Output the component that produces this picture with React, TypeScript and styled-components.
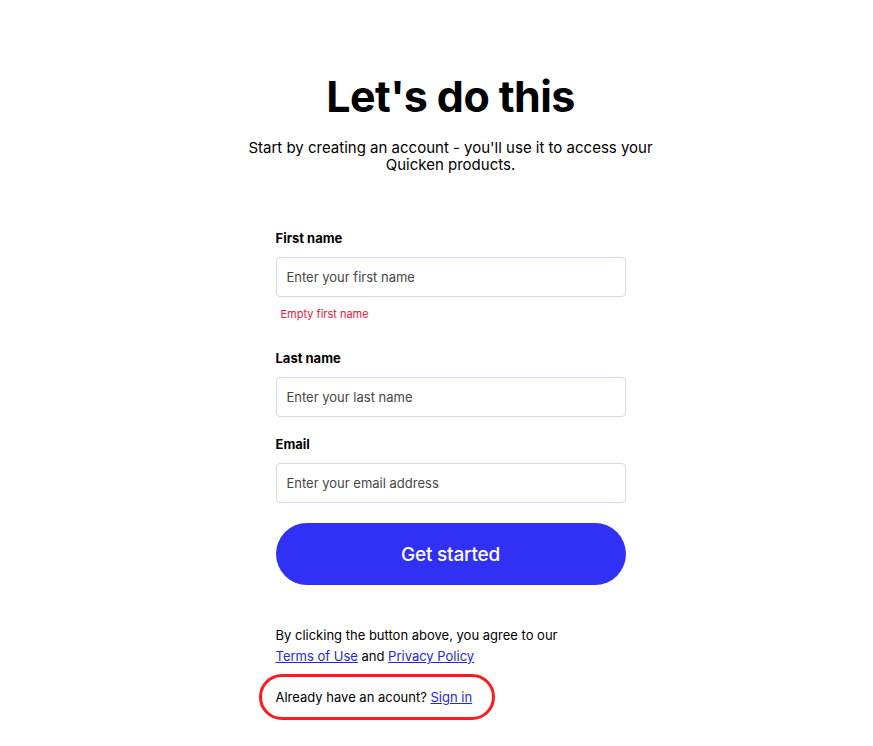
import React from "react";
import styled, { createGlobalStyle } from "styled-components";

const Global = createGlobalStyle`
  html, body { margin: 0; padding: 0; background: #ffffff; }
  body { font-family: Inter, "Open Sans", "Liberation Sans", sans-serif; color: #000; }
`;

const Page = styled.main`
  display: flex;
  flex-direction: column;
  align-items: center;
  padding-top: 70px;
  padding-left: 28px;
`;

const Title = styled.h1`
  margin: 0;
  font-size: 43px;
  font-weight: 700;
  letter-spacing: -0.6px;
  line-height: 52px;
`;

const Subtitle = styled.p`
  margin: 17px 0 0;
  width: 410px;
  text-align: center;
  font-size: 15px;
  line-height: 17px;
  font-weight: 400;
`;

const Form = styled.form`
  margin-top: 57px;
  width: 350px;
  display: flex;
  flex-direction: column;
`;

const Field = styled.div<{ $gap: number }>`
  display: flex;
  flex-direction: column;
  margin-bottom: ${(p) => p.$gap}px;
`;

const Label = styled.label`
  font-size: 13px;
  font-weight: 700;
  line-height: 16px;
  margin-bottom: 11px;
`;

const Input = styled.input`
  box-sizing: border-box;
  height: 40px;
  width: 100%;
  border: 1px solid #d6d6ec;
  border-radius: 4px;
  padding: 0 10px;
  font-family: inherit;
  font-size: 13px;
  color: #222;
  &::placeholder { color: #464646; }
  outline: none;
`;

const ErrorText = styled.span`
  color: #e8173c;
  font-size: 11px;
  line-height: 14px;
  margin-top: 10px;
  padding-left: 5px;
`;

const Button = styled.button`
  height: 62px;
  border: none;
  border-radius: 31px;
  background: #3131f6;
  color: #fff;
  font-family: inherit;
  font-size: 19px;
  font-weight: 500;
  letter-spacing: -0.2px;
  cursor: pointer;
`;

const Legal = styled.p`
  margin: 40px 0 0;
  font-size: 13px;
  line-height: 21px;
`;

const Link = styled.a`
  color: #2525e8;
  text-decoration: underline;
`;

const SignInRing = styled.div`
  align-self: flex-start;
  margin: 7px 0 0 -17px;
  box-sizing: border-box;
  width: 236px;
  height: 46px;
  border: 3px solid #ff1b1b;
  border-radius: 23px;
  display: flex;
  align-items: center;
  padding-left: 14px;
  font-size: 13px;
`;

export default function App() {
  return (
    <>
      <Global />
      <Page>
        <Title>Let's do this</Title>
        <Subtitle>
          Start by creating an account - you'll use it to access your Quicken products.
        </Subtitle>
        <Form onSubmit={(e) => e.preventDefault()}>
          <Field $gap={29}>
            <Label>First name</Label>
            <Input placeholder="Enter your first name" />
            <ErrorText>Empty first name</ErrorText>
          </Field>
          <Field $gap={19}>
            <Label>Last name</Label>
            <Input placeholder="Enter your last name" />
          </Field>
          <Field $gap={20}>
            <Label>Email</Label>
            <Input placeholder="Enter your email address" />
          </Field>
          <Button type="submit">Get started</Button>
          <Legal>
            By clicking the button above, you agree to our
            <br />
            <Link href="#">Terms of Use</Link> and <Link href="#">Privacy Policy</Link>
          </Legal>
          <SignInRing>
            <span>
              Already have an acount? <Link href="#">Sign in</Link>
            </span>
          </SignInRing>
        </Form>
      </Page>
    </>
  );
}
